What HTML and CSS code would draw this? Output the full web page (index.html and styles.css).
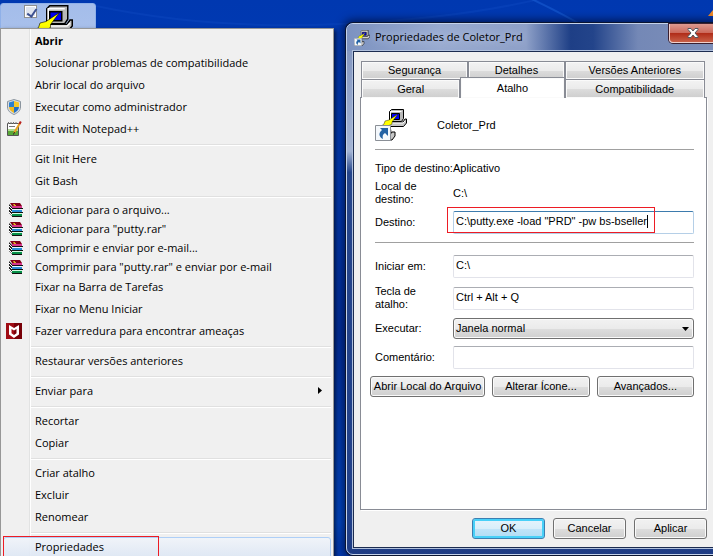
FILE: index.html
```html
<!DOCTYPE html>
<html lang="pt-BR">
<head>
    <meta charset="UTF-8">
    <meta name="viewport" content="width=device-width, initial-scale=1.0">
    <title>Propriedades de Coletor_Prd</title>
    <link rel="stylesheet" href="styles.css">
</head>
<body>

    <!-- Shared icons -->
    <svg class="defs" aria-hidden="true">
        <symbol id="putty" viewBox="0 0 32 32">
            <path d="M3 17h12l1 6-3 3H3z" fill="#b8b8b8" stroke="#000"/>
            <path d="M1 27h13l3-4h3v4l-3 4H1z" fill="#c6c6c6" stroke="#000"/>
            <path d="M14 13h14l2-3h1.500v4l-3 3.500H13z" fill="#c6c6c6" stroke="#000"/>
            <path d="M15 14h13l2-2" fill="none" stroke="#fff"/>
            <path d="M14.500 2.500l2-2h12v9l-2 3h-12z" fill="#b8b8b8" stroke="#000"/>
            <path d="M15.500 12V2.500h11" fill="none" stroke="#fff"/>
            <path d="M16.500 4.500h8v6h-8z" fill="#0000f0" stroke="#000"/>
            <path d="M23 5l-9 6-4 1-1 3-7 5 11-3 4-2v-2z" fill="#ff0" stroke="#000" stroke-width=".4"/>
        </symbol>
        <symbol id="shortcut" viewBox="0 0 16 16">
            <path d="M.5.5h15v15H.5z" fill="#f4f8fc" stroke="#8a8f96"/>
            <path d="M5 3h8v8l-3-3c-2 1-3 3-2 6-4-2-5-6-1-9z" fill="#2362a4"/>
        </symbol>
        <symbol id="books" viewBox="0 0 14 14">
            <path d="M1 0h10l2 3H3z" fill="#800018"/>
            <path d="M0 1l3 3v9L0 10z" fill="#222"/>
            <path d="M3 3h10v2H3z" fill="#d8358c"/>
            <path d="M3 5h11v1H3zM3 9h11v1H3zM3 13h10v1H3z" fill="#111"/>
            <path d="M4 6h9v1H4z" fill="#e8f4ff"/>
            <path d="M3 7h10v2H3z" fill="#288cd8"/>
            <path d="M4 10h9v1H4z" fill="#d4ffe4"/>
            <path d="M3 11h10v2H3z" fill="#079048"/>
            <path d="M0 3l3 3M0 6l3 3M0 9l3 3" stroke="#fff"/>
            <path d="M4 1h2v1h1v1H5z" fill="#d8b020"/>
        </symbol>
    </svg>

    <div class="desktop">
        <svg class="streaks" viewBox="0 0 713 556" preserveAspectRatio="none" aria-hidden="true">
            <path d="M96 6Q210 30 340 24T560 -6" fill="none" stroke="#1450c8" stroke-width="2" opacity=".3"/>
            <path d="M525 -4Q560 12 590 30" fill="none" stroke="#1c62d8" stroke-width="2" opacity=".5"/>
            <path d="M713 10v6h-5z" fill="#f08a28"/>
        </svg>

        <div class="tile">
            <input class="tile-check" type="checkbox" aria-label="Coletor_Prd" checked>
            <svg class="tile-icon"><use href="#putty"/></svg>
        </div>

        <ul class="menu">
            <li><button class="item strong">Abrir</button></li>
            <li><button class="item">Solucionar problemas de compatibilidade</button></li>
            <li><button class="item">Abrir local do arquivo</button></li>
            <li>
                <button class="item">
                    <svg class="icon" viewBox="0 0 16 16">
                        <path d="M8 .5l6.500 2V8c0 4-3 6-6.500 7.500C4.500 14 1.500 12 1.500 8V2.500z" fill="#d8dde2" stroke="#8b959e"/>
                        <path d="M8 2v6H3V3.500z" fill="#2b7fd0"/>
                        <path d="M8 2v6h5V3.500z" fill="#f8c828"/>
                        <path d="M3 8h5v6C5 12.500 3.200 11 3 8z" fill="#f0b820"/>
                        <path d="M13 8H8v6c3-1.500 4.800-3 5-6z" fill="#2470c4"/>
                    </svg>
                    Executar como administrador
                </button>
            </li>
            <li>
                <button class="item">
                    <svg class="icon" viewBox="0 0 16 16">
                        <path d="M1.500 2.500h11v12h-11z" fill="#fff" stroke="#555"/>
                        <path d="M2 8h10v6H2z" fill="#58a838"/>
                        <path d="M2 8h10v2H2z" fill="#b0dc90"/>
                        <path d="M3 5.500h6M2.500 1v2M5 1v2M7.500 1v2M10 1v2" stroke="#777"/>
                        <path d="M14 2L8 12" stroke="#e8a020" stroke-width="2"/>
                        <path d="M14.800 .5L13.500 3" stroke="#b82020" stroke-width="2"/>
                        <path d="M8.500 11l-1 2.500" stroke="#222"/>
                    </svg>
                    Edit with Notepad++
                </button>
            </li>
            <li class="sep"></li>
            <li><button class="item">Git Init Here</button></li>
            <li><button class="item">Git Bash</button></li>
            <li class="sep"></li>
            <li><button class="item short"><svg class="icon books"><use href="#books"/></svg>Adicionar para o arquivo...</button></li>
            <li><button class="item short"><svg class="icon books"><use href="#books"/></svg>Adicionar para "putty.rar"</button></li>
            <li><button class="item short"><svg class="icon books"><use href="#books"/></svg>Comprimir e enviar por e-mail...</button></li>
            <li><button class="item short"><svg class="icon books"><use href="#books"/></svg>Comprimir para "putty.rar" e enviar por e-mail</button></li>
            <li><button class="item">Fixar na Barra de Tarefas</button></li>
            <li><button class="item">Fixar no Menu Iniciar</button></li>
            <li>
                <button class="item">
                    <svg class="icon" viewBox="0 0 16 16">
                        <path d="M0 0h16v16H0z" fill="#a00c14"/>
                        <path d="M8 0h8v16H8z" fill="#780008"/>
                        <path d="M3 2l5 3 5-3v9.500L8 15l-5-3.500zM5.500 6v4.200L8 12l2.500-1.800V6L8 7.500z" fill="#fff" fill-rule="evenodd"/>
                    </svg>
                    Fazer varredura para encontrar ameaças
                </button>
            </li>
            <li class="sep"></li>
            <li><button class="item">Restaurar versões anteriores</button></li>
            <li class="sep"></li>
            <li>
                <button class="item">
                    Enviar para
                    <svg class="submenu-arrow" viewBox="0 0 4 7"><path d="M0 0l4 3.500L0 7z"/></svg>
                </button>
            </li>
            <li class="sep"></li>
            <li><button class="item">Recortar</button></li>
            <li><button class="item">Copiar</button></li>
            <li class="sep"></li>
            <li><button class="item">Criar atalho</button></li>
            <li><button class="item">Excluir</button></li>
            <li><button class="item">Renomear</button></li>
            <li class="sep"></li>
            <li class="marked"><button class="item hover">Propriedades</button></li>
        </ul>

        <section class="dialog">
            <header class="titlebar">
                <svg class="title-icon" viewBox="0 0 32 32">
                    <use href="#putty"/>
                    <use href="#shortcut" y="16" width="16" height="16"/>
                </svg>
                <h1 class="title">Propriedades de Coletor_Prd</h1>
                <button class="close" aria-label="Fechar">
                    <svg viewBox="0 0 12 10">
                        <path d="M1 .5h3L6 3 8 .5h3v1L8 5l3 3.500v1H8L6 7 4 9.500H1v-1L4 5 1 1.500z" fill="#fff" stroke="#55585f"/>
                    </svg>
                </button>
            </header>

            <div class="client">
                <div class="tabs" role="tablist">
                    <div class="tab-row back">
                        <button class="tab" role="tab">Segurança</button>
                        <button class="tab" role="tab">Detalhes</button>
                        <button class="tab" role="tab">Versões Anteriores</button>
                    </div>
                    <div class="tab-row front">
                        <button class="tab" role="tab">Geral</button>
                        <button class="tab active" role="tab" aria-selected="true">Atalho</button>
                        <button class="tab" role="tab">Compatibilidade</button>
                    </div>
                </div>

                <form class="sheet">
                    <div class="heading">
                        <svg class="big-icon" viewBox="0 0 32 32">
                            <use href="#putty"/>
                            <use href="#shortcut" y="16" width="16" height="16"/>
                        </svg>
                        <span>Coletor_Prd</span>
                    </div>
                    <hr>
                    <div class="fields compact">
                        <span>Tipo de destino:</span>
                        <span>Aplicativo</span>
                        <span>Local de<br>destino:</span>
                        <span>C:\</span>
                        <label for="target">Destino:</label>
                        <div class="marked-field">
                            <input class="text focused" id="target" type="text" value='C:\putty.exe -load "PRD" -pw bs-bseller'>
                        </div>
                    </div>
                    <hr>
                    <div class="fields">
                        <label for="start">Iniciar em:</label>
                        <input class="text" id="start" type="text" value="C:\">
                        <label for="hotkey">Tecla de<br>atalho:</label>
                        <input class="text" id="hotkey" type="text" value="Ctrl + Alt + Q">
                        <label for="run">Executar:</label>
                        <div class="select-wrap">
                            <select class="select" id="run">
                                <option>Janela normal</option>
                            </select>
                            <svg class="select-arrow" viewBox="0 0 7 4"><path d="M0 0h7L3.500 4z"/></svg>
                        </div>
                        <label for="comment">Comentário:</label>
                        <input class="text" id="comment" type="text">
                    </div>
                    <div class="actions">
                        <button class="btn" type="button">Abrir Local do Arquivo</button>
                        <button class="btn" type="button">Alterar Ícone...</button>
                        <button class="btn" type="button">Avançados...</button>
                    </div>
                </form>

                <footer class="footer">
                    <button class="btn default">OK</button>
                    <button class="btn">Cancelar</button>
                    <button class="btn">Aplicar</button>
                </footer>
            </div>
        </section>
    </div>

</body>
</html>
```
FILE: styles.css
```css
* {
    box-sizing: border-box;
}
body {
    margin: 0;
    font-family: "Liberation Sans", Arial, sans-serif;
    font-size: 11px;
    line-height: 13px;
    color: #000;
}
button, input, select {
    font: inherit;
    color: inherit;
    margin: 0;
}
.defs {
    position: absolute;
    width: 0;
    height: 0;
}
.desktop {
    position: relative;
    height: 100vh;
    overflow: hidden;
    background: linear-gradient(#0038b0 0%, #003cb8 30%, #0030a0 60%, #0048c8 94%, #0038b0 100%);
}
.streaks {
    display: block;
    width: 100%;
    height: 100%;
}

/* Selected desktop shortcut */
.tile {
    position: absolute;
    top: 3px;
    left: 0;
    width: 96px;
    height: 96px;
    border: 1px solid #8fb0e8;
    border-radius: 3px;
    background: linear-gradient(#a4bdea, #b4c8ee);
}
.tile-check {
    position: absolute;
    top: 1px;
    left: 23px;
    width: 13px;
    height: 13px;
    appearance: none;
    border: 1px solid #8e8f8f;
    background: #dfe4ee;
    box-shadow: inset 0 0 0 1px #fff;
}
.tile-check::after {
    content: "";
    position: absolute;
    top: 1px;
    left: 4px;
    width: 4px;
    height: 8px;
    border: solid #3c5090;
    border-width: 0 2px 2px 0;
    transform: rotate(35deg);
}
.tile-icon {
    position: absolute;
    top: 1px;
    left: 24px;
    width: 48px;
    height: 48px;
}

/* Context menu */
.menu {
    position: absolute;
    top: 28px;
    left: 0;
    width: 334px;
    margin: 0;
    padding: 2px;
    list-style: none;
    font-family: "Open Sans", "Noto Sans", sans-serif;
    border: 1px solid #979797;
    background: linear-gradient(to right, #f0f0f0 28px, #e2e3e3 28px, #e2e3e3 29px, #fff 29px, #fff 30px, #f0f0f0 30px);
    box-shadow: 2px 2px 4px rgba(0, 0, 0, 0.6);
}
.item {
    display: flex;
    align-items: center;
    position: relative;
    width: 100%;
    height: 22px;
    padding: 0 8px 3px 31px;
    border: 1px solid transparent;
    border-radius: 3px;
    background: none;
    text-align: left;
    white-space: nowrap;
}
.item.short {
    height: 19px;
    padding-bottom: 2px;
}
.item.strong {
    font-weight: bold;
}
.item.hover {
    border-color: #aecff7;
    background: linear-gradient(rgba(240, 244, 250, 0.9), rgba(220, 230, 244, 0.9));
}
.icon {
    position: absolute;
    left: 2px;
    width: 16px;
    height: 16px;
}
.icon.books {
    left: 5px;
    width: 14px;
    height: 14px;
}
.submenu-arrow {
    width: 4px;
    height: 7px;
    margin-left: auto;
}
.sep {
    height: 2px;
    margin: 3px 0 3px 28px;
    border-top: 1px solid #e0e0e0;
    border-bottom: 1px solid #fff;
}
.marked {
    position: relative;
}
.marked::after {
    content: "";
    position: absolute;
    top: -1px;
    left: 0;
    width: 154px;
    height: 20px;
    border: 1px solid #ed1c24;
}

/* Properties window */
.dialog {
    position: absolute;
    top: 23px;
    left: 346px;
    right: -8px;
    padding: 0 6px 6px;
    border: 1px solid #c4d2ea;
    border-radius: 7px;
    background: linear-gradient(#7c90bc, #a4b4d4 24%, #26468c 28%, #20408a 94%, #1e3c84);
    box-shadow: 0 0 0 1px #0a1430, 0 0 8px 3px rgba(0, 0, 20, 0.6);
}
.titlebar {
    display: flex;
    align-items: center;
    height: 27px;
    margin: 0 -6px;
    padding-left: 7px;
    border-radius: 6px 6px 0 0;
    background: linear-gradient(to right, #7c92c0, #98aad0 25%, #8ea0c8 48%, #1e3f86 60%, #23448a 66%, #7488b6 78%, #7e90ba);
}
.title-icon {
    width: 16px;
    height: 16px;
}
.title {
    flex: 1;
    margin: 0 0 0 5px;
    padding-bottom: 2px;
    font-family: "Open Sans", "Noto Sans", sans-serif;
    font-size: 11px;
    font-weight: normal;
    text-shadow: 0 0 8px #d0daf0;
}
.close {
    display: flex;
    align-items: center;
    justify-content: center;
    align-self: flex-start;
    width: 48px;
    height: 19px;
    margin-right: 3px;
    padding: 0;
    border: 1px solid #f0d0cc;
    border-top: 0;
    border-radius: 0 0 4px 4px;
    background: linear-gradient(#dc9a90, #cc6a5c 48%, #b02c18 52%, #c86048);
    box-shadow: 0 0 0 1px #3a2030;
}
.close svg {
    width: 12px;
    height: 10px;
}
.client {
    padding: 9px 6px 8px;
    border: 1px solid #1c2c50;
    background: #f0f0f0;
    box-shadow: 0 0 0 1px #b0c0dc;
}
.tabs {
    padding: 0 2px 0 1px;
}
.tab-row {
    display: grid;
    height: 18px;
}
.tab-row.back {
    grid-template-columns: 107fr 96fr 140fr;
}
.tab-row.front {
    grid-template-columns: 99fr 104fr 140fr;
}
.tab {
    padding: 0;
    border: 1px solid #898c95;
    border-bottom: 0;
    background: linear-gradient(#f3f3f3, #ebebeb 50%, #dcdcdc 52%, #cecece);
    box-shadow: inset 0 0 0 1px #fafafa;
}
.tab.active {
    position: relative;
    height: 21px;
    margin-top: -2px;
    background: #fff;
}
.sheet {
    padding: 11px 12px 112px 14px;
    border: 1px solid #898c95;
    background: #fff;
    box-shadow: 1px 1px 0 #fff;
}
.heading {
    display: flex;
    align-items: center;
    gap: 30px;
}
.big-icon {
    width: 32px;
    height: 32px;
}
hr {
    height: 1px;
    margin: 8px 0 12px;
    border: 0;
    background: #a0a0a0;
}
.fields {
    display: grid;
    grid-template-columns: 78px 1fr;
    row-gap: 7px;
    align-items: center;
    white-space: nowrap;
}
.fields.compact {
    row-gap: 5px;
}
.text {
    display: block;
    width: 100%;
    height: 23px;
    padding: 0 2px 3px;
    border: 1px solid #e2e3ea;
    border-top-color: #abadb3;
    border-radius: 2px;
    background: #fff;
}
.text.focused {
    border-color: #b5cfe7;
    border-top-color: #3d7bad;
}
.marked-field {
    position: relative;
}
/* text caret */
.marked-field::before {
    content: "";
    position: absolute;
    top: 4px;
    left: 194px;
    width: 1px;
    height: 13px;
    background: #000;
}
.marked-field::after {
    content: "";
    position: absolute;
    top: -4px;
    left: -6px;
    width: 206px;
    height: 24px;
    border: 1px solid #ed1c24;
}
.select-wrap {
    position: relative;
}
.select {
    display: block;
    width: 100%;
    height: 21px;
    padding: 0 2px;
    appearance: none;
    border: 1px solid #707070;
    border-radius: 3px;
    background: linear-gradient(#f2f2f2, #ebebeb 50%, #dddddd 52%, #cfcfcf);
    box-shadow: inset 0 0 0 1px #fafafa;
}
.select-arrow {
    position: absolute;
    top: 9px;
    right: 5px;
    width: 7px;
    height: 4px;
}
.btn {
    height: 21px;
    padding: 0;
    border: 1px solid #707070;
    border-radius: 3px;
    background: linear-gradient(#f2f2f2, #ebebeb 50%, #dddddd 52%, #cfcfcf);
    box-shadow: inset 0 0 0 1px #fafafa;
    white-space: nowrap;
}
.btn.default {
    border-color: #3c7fb1;
    background: linear-gradient(#e6f4fc, #d8eefa 50%, #c0e4f8 52%, #b0dcf4);
    box-shadow: inset 0 0 0 2px #48d0f8;
}
.actions {
    display: grid;
    grid-template-columns: 115fr 97fr 97fr;
    gap: 7px;
    margin: 7px 0 0 -5px;
}
.footer {
    display: flex;
    justify-content: flex-end;
    gap: 8px;
    padding-top: 8px;
}
.footer .btn {
    width: 73px;
}
```
